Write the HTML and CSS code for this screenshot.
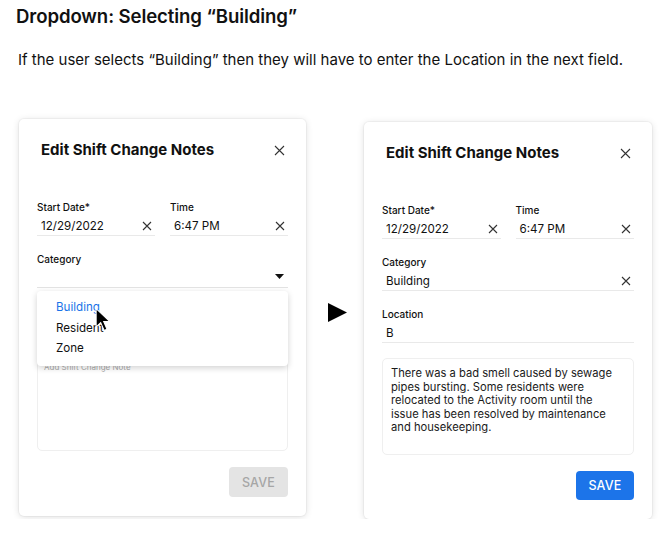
FILE: index.html
```html
<!DOCTYPE html>
<html>
<head>
<meta charset="utf-8">
<link rel="stylesheet" href="styles.css">
</head>
<body>
<h1 class="heading">Dropdown: Selecting “Building”</h1>
<p class="intro">If the user selects “Building” then they will have to enter the Location in the next field.</p>

<div class="stage">
  <div class="card card-left">
    <div class="card-head">
      <h2 class="card-title">Edit Shift Change Notes</h2>
      <svg class="close" width="11" height="11" viewBox="0 0 11 11"><path d="M1 1L10 10M10 1L1 10" stroke="#333" stroke-width="1.1" fill="none"/></svg>
    </div>
    <div class="row">
      <div class="field">
        <div class="label">Start Date*</div>
        <div class="control"><span class="value">12/29/2022</span><svg class="clear" width="10" height="10" viewBox="0 0 10 10"><path d="M1 1L9 9M9 1L1 9" stroke="#333" stroke-width="1.1" fill="none"/></svg></div>
      </div>
      <div class="field">
        <div class="label">Time</div>
        <div class="control"><span class="value">6:47 PM</span><svg class="clear" width="10" height="10" viewBox="0 0 10 10"><path d="M1 1L9 9M9 1L1 9" stroke="#333" stroke-width="1.1" fill="none"/></svg></div>
      </div>
    </div>
    <div class="field field-gap dropdown-field">
      <div class="label">Category</div>
      <div class="control"><span class="value"></span><svg class="caret" width="9" height="5" viewBox="0 0 9 5"><path d="M0 0H9L4.5 5Z" fill="#111"/></svg></div>
      <div class="menu">
        <div class="menu-item active">Building</div>
        <div class="menu-item">Resident</div>
        <div class="menu-item">Zone</div>
        <svg class="cursor" width="16" height="25" viewBox="0 0 14 21"><path d="M1 1L1 17L5 13.2L8 20L10.5 19L7.6 12.3L13 12.3Z" fill="#000" stroke="#fff" stroke-width="0.9"/></svg>
      </div>
    </div>
    <div class="note note-left"><span class="placeholder">Add Shift Change Note</span></div>
    <div class="actions"><button class="save disabled">SAVE</button></div>
  </div>

  <svg class="play" width="19" height="19" viewBox="0 0 19 19"><path d="M0 0L19 9.5L0 19Z" fill="#000"/></svg>

  <div class="card card-right">
    <div class="card-head">
      <h2 class="card-title">Edit Shift Change Notes</h2>
      <svg class="close" width="11" height="11" viewBox="0 0 11 11"><path d="M1 1L10 10M10 1L1 10" stroke="#333" stroke-width="1.1" fill="none"/></svg>
    </div>
    <div class="row">
      <div class="field">
        <div class="label">Start Date*</div>
        <div class="control"><span class="value">12/29/2022</span><svg class="clear" width="10" height="10" viewBox="0 0 10 10"><path d="M1 1L9 9M9 1L1 9" stroke="#333" stroke-width="1.1" fill="none"/></svg></div>
      </div>
      <div class="field">
        <div class="label">Time</div>
        <div class="control"><span class="value">6:47 PM</span><svg class="clear" width="10" height="10" viewBox="0 0 10 10"><path d="M1 1L9 9M9 1L1 9" stroke="#333" stroke-width="1.1" fill="none"/></svg></div>
      </div>
    </div>
    <div class="field field-gap">
      <div class="label">Category</div>
      <div class="control"><span class="value">Building</span><svg class="clear" width="10" height="10" viewBox="0 0 10 10"><path d="M1 1L9 9M9 1L1 9" stroke="#333" stroke-width="1.1" fill="none"/></svg></div>
    </div>
    <div class="field field-gap">
      <div class="label">Location</div>
      <div class="control"><span class="value">B</span></div>
    </div>
    <div class="note note-right">There was a bad smell caused by sewage pipes bursting. Some residents were relocated to the Activity room until the issue has been resolved by maintenance and housekeeping.</div>
    <div class="actions"><button class="save primary">SAVE</button></div>
  </div>
</div>
</body>
</html>
```

FILE: styles.css
```css
* { box-sizing: border-box; }
body {
  margin: 0;
  background: #fff;
  font-family: Inter, "Noto Sans", sans-serif;
  color: #111;
}
.heading {
  margin: 0;
  padding: 6px 0 0 16px;
  font-size: 18.6px;
  line-height: 20px;
  font-weight: 600;
  letter-spacing: -0.1px;
}
.intro {
  margin: 25px 0 0 18px;
  font-size: 15px;
  line-height: 18px;
  color: #111;
}
.stage {
  display: flex;
  align-items: flex-start;
  margin-top: 50px;
  padding-left: 19px;
}
.card {
  background: #fff;
  border-radius: 5px;
  box-shadow: 0 0 0 1px rgba(0,0,0,0.03), 0 1px 7px rgba(0,0,0,0.13);
  padding: 21px 18px 19px 18px;
  height: 397px;
}
.card-left { width: 287px; }
.card-right { width: 288px; margin-left: 17px; margin-top: 3px; }
.play { margin-left: 22px; margin-top: 184px; flex: none; }
.card-head {
  display: flex;
  align-items: center;
  justify-content: space-between;
  padding-left: 4px;
  padding-right: 3px;
  height: 20px;
}
.card-title {
  margin: 0;
  font-size: 15px;
  line-height: 20px;
  font-weight: 700;
  color: #111;
}
.row {
  display: flex;
  gap: 15px;
  margin-top: 40px;
}
.row .field { flex: 1; }
.field { position: relative; }
.field-gap { margin-top: 16px; }
.label {
  font-size: 10px;
  line-height: 14px;
  font-weight: 500;
  color: #111;
}
.control {
  height: 22px;
  display: flex;
  align-items: center;
  justify-content: space-between;
  padding: 2px 3px 0 4px;
  border-bottom: 1px solid #e9e9e9;
}
.value {
  font-size: 11.6px;
  line-height: 16px;
  color: #111;
}
.clear { flex: none; margin-top: 1px; }
.caret { flex: none; margin-right: 1px; margin-bottom: 2px; }
.dropdown-field .control { border-bottom-color: #e3e3e3; }
.menu {
  position: absolute;
  left: 0;
  right: 0;
  top: 39px;
  height: 75px;
  background: #fff;
  border-radius: 4px;
  box-shadow: 0 2px 6px rgba(0,0,0,0.18);
  padding: 6px 0 0 19px;
  z-index: 2;
}
.menu-item {
  font-size: 11.6px;
  line-height: 20.5px;
  color: #111;
}
.menu-item.active { color: #1a73e8; }
.cursor {
  position: absolute;
  left: 58px;
  top: 16px;
}
.note {
  border: 1px solid #efefef;
  border-radius: 5px;
}
.note-left {
  margin-top: 67px;
  height: 96px;
  padding: 3px 6px;
  line-height: 10px;
}
.placeholder {
  font-size: 8px;
  line-height: 10px;
  color: #aaa;
}
.note-right {
  margin-top: 15px;
  height: 97px;
  padding: 8px 16px 8px 8px;
  font-size: 11.2px;
  line-height: 13.5px;
  color: #1a1a1a;
}
.actions {
  display: flex;
  justify-content: flex-end;
  margin-top: 16px;
}
.save {
  font-family: Inter, "Noto Sans", sans-serif;
  border: none;
  border-radius: 4px;
  width: 58px;
  height: 29px;
  font-size: 12.5px;
  font-weight: 500;
  letter-spacing: 0.2px;
  padding: 0;
}
.save.primary { background: #1c74e9; color: #fff; }
.save.disabled { background: #e4e4e4; color: #a6a6a6; width: 59px; height: 30px; }
```
